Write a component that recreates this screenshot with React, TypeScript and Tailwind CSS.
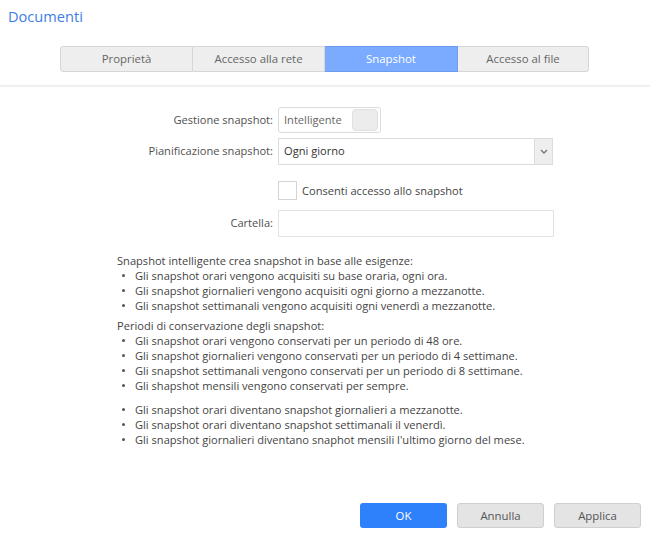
import React from "react";

const tabs = [
  { label: "Proprietà", w: "w-[133px] rounded-l-[3px]" },
  { label: "Accesso alla rete", w: "w-[132px] border-l-0" },
  { label: "Snapshot", w: "w-[133px] border-l-0" },
  { label: "Accesso al file", w: "w-[131px] border-l-0 rounded-r-[3px]" },
];

const smart = [
  "Gli snapshot orari vengono acquisiti su base oraria, ogni ora.",
  "Gli snapshot giornalieri vengono acquisiti ogni giorno a mezzanotte.",
  "Gli snapshot settimanali vengono acquisiti ogni venerdì a mezzanotte.",
];

const retention = [
  "Gli snapshot orari vengono conservati per un periodo di 48 ore.",
  "Gli snapshot giornalieri vengono conservati per un periodo di 4 settimane.",
  "Gli snapshot settimanali vengono conservati per un periodo di 8 settimane.",
  "Gli shapshot mensili vengono conservati per sempre.",
];

const promote = [
  "Gli snapshot orari diventano snapshot giornalieri a mezzanotte.",
  "Gli snapshot orari diventano snapshot settimanali il venerdì.",
  "Gli snapshot giornalieri diventano snaphot mensili l'ultimo giorno del mese.",
];

function Bullets({ items }: { items: string[] }) {
  return (
    <ul>
      {items.map((t) => (
        <li key={t} className="flex h-[15px] items-center leading-[15px]">
          <span className="flex w-[18px] justify-start pl-[5px]">
            <span className="h-[3px] w-[3px] rounded-full bg-[#555]" />
          </span>
          <span>{t}</span>
        </li>
      ))}
    </ul>
  );
}

export default function App() {
  return (
    <div className="flex h-[537px] w-[650px] flex-col bg-white font-['Open_Sans',sans-serif] text-[11.1px] text-[#505050]">
      {/* header */}
      <div className="h-[46px] pl-[8px] pt-[6px] text-[14.6px] leading-[20px] text-[#3d7ee6]">Documenti</div>

      {/* tabs */}
      <div className="flex pl-[60px]">
        {tabs.map((t) => {
          const active = t.label === "Snapshot";
          return (
            <div
              key={t.label}
              className={
                "flex h-[26px] items-center justify-center border text-[11.4px] " +
                t.w +
                (active
                  ? " border-[#6b9cf2] bg-[#7aabff] text-white"
                  : " border-[#d6d6d6] bg-[#eeeeee] text-[#666]")
              }
            >
              {t.label}
            </div>
          );
        })}
      </div>

      <div className="mt-[13px] h-[2px] bg-[#f0f0f0]" />

      {/* form */}
      <div className="mt-[20px] flex flex-col">
        <div className="flex h-[26px] items-center">
          <div className="w-[273px] text-right">Gestione snapshot:</div>
          <div className="ml-[5px] flex h-[26px] w-[103px] items-center justify-between rounded-[3px] border border-[#dcdcdc] pl-[5px] pr-[2px] text-[#666]">
            <span>Intelligente</span>
            <span className="h-[22px] w-[26px] rounded-[4px] border border-[#e0e0e0] bg-[#ececec]" />
          </div>
        </div>

        <div className="mt-[5px] flex h-[27px] items-center">
          <div className="w-[273px] text-right">Pianificazione snapshot:</div>
          <div className="ml-[5px] flex h-[27px] w-[275px] items-center border border-[#dcdcdc]">
            <span className="flex-1 pl-[5px] text-[#333]">Ogni giorno</span>
            <span className="flex h-full w-[18px] items-center justify-center border-l border-[#dcdcdc] bg-[#eeeeee]">
              <svg width="8" height="5" viewBox="0 0 8 5">
                <path d="M1 1l3 3 3-3" fill="none" stroke="#777" strokeWidth="1.4" />
              </svg>
            </span>
          </div>
        </div>

        <div className="mt-[16px] flex h-[19px] items-center pl-[278px]">
          <span className="h-[19px] w-[19px] border border-[#d4d4d4] bg-white" />
          <span className="ml-[5px] pt-[1px] text-[#444]">Consenti accesso allo snapshot</span>
        </div>

        <div className="mt-[10px] flex h-[27px] items-center">
          <div className="w-[273px] text-right">Cartella:</div>
          <div className="ml-[5px] h-[27px] w-[276px] border border-[#e2e2e2]" />
        </div>
      </div>

      {/* description */}
      <div className="mt-[16px] pl-[117px] leading-[15px] text-[#444]">
        <div className="h-[15px]">Snapshot intelligente crea snapshot in base alle esigenze:</div>
        <Bullets items={smart} />
        <div className="mt-[5px] h-[15px]">Periodi di conservazione degli snapshot:</div>
        <Bullets items={retention} />
        <div className="mt-[9px]">
          <Bullets items={promote} />
        </div>
      </div>

      {/* buttons */}
      <div className="mt-auto mb-[9px] flex justify-end gap-[10px] pr-[9px]">
        <button className="h-[25px] w-[87px] rounded-[3px] bg-[#2f80fb] text-[11.4px] text-white">OK</button>
        <button className="h-[25px] w-[87px] rounded-[3px] border border-[#cfcfcf] bg-[#e4e4e4] text-[11.4px] text-[#555]">
          Annulla
        </button>
        <button className="h-[25px] w-[87px] rounded-[3px] border border-[#cfcfcf] bg-[#e4e4e4] text-[11.4px] text-[#555]">
          Applica
        </button>
      </div>
    </div>
  );
}
